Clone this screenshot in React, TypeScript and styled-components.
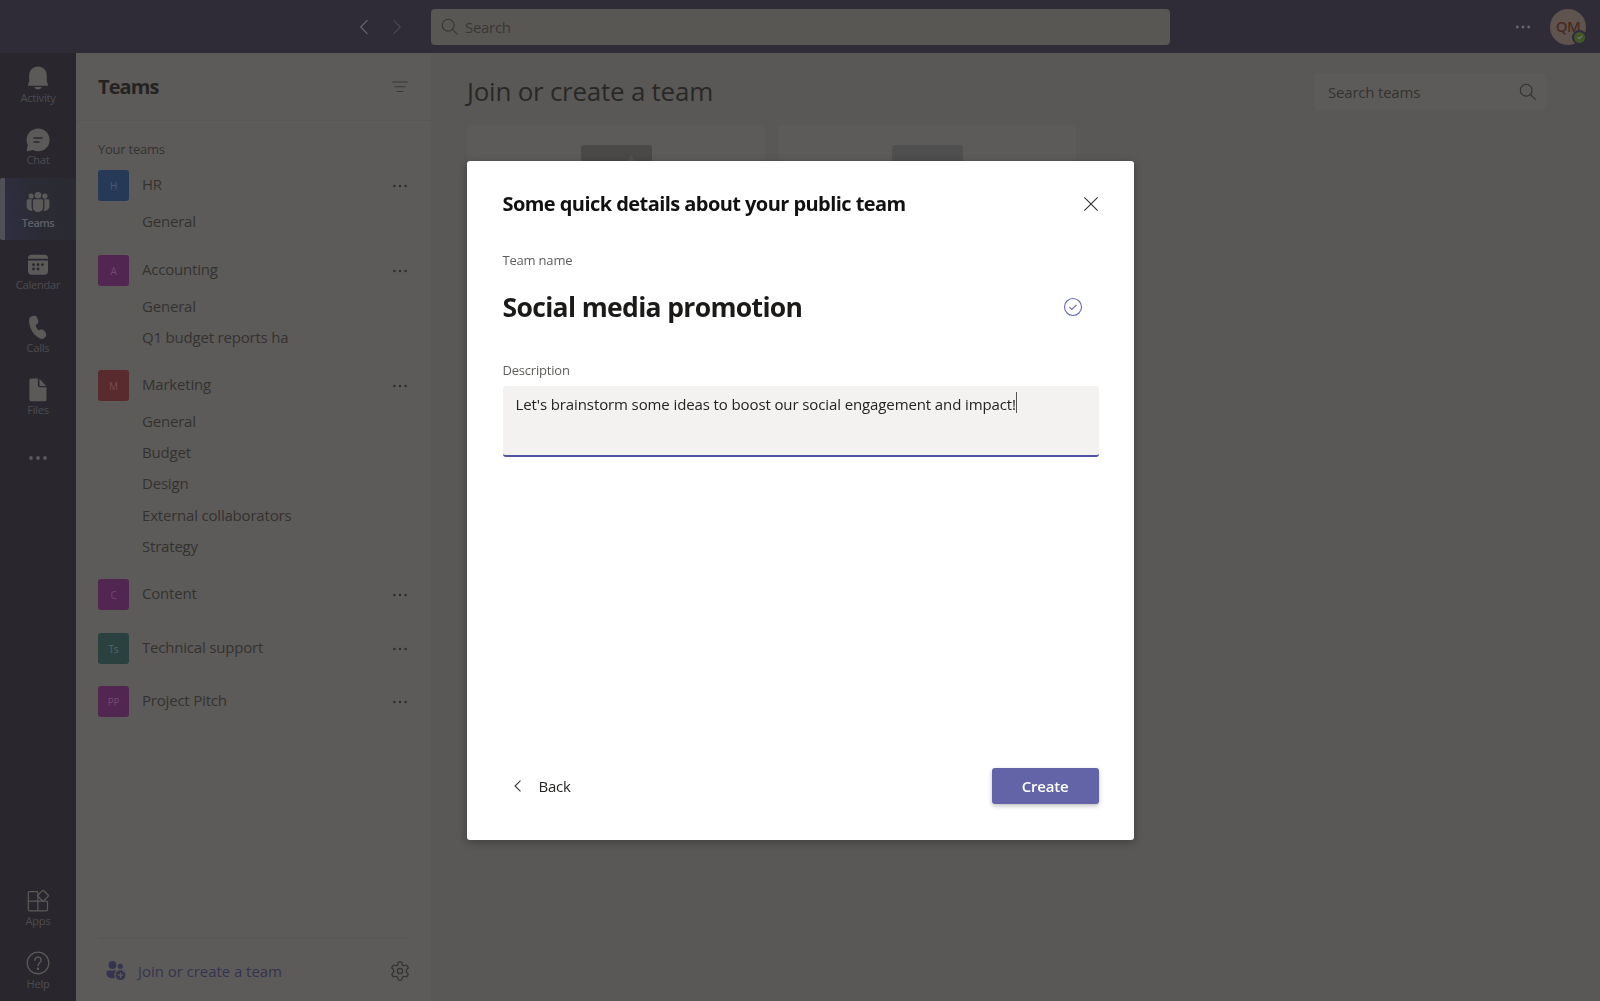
import React from 'react';
import styled, { createGlobalStyle } from 'styled-components';

type Team = {
  initials: string;
  name: string;
  color: string;
  ink: string;
  channels: string[];
};

const teams: Team[] = [
  { initials: 'H', name: 'HR', color: '#263a58', ink: '#485a78', channels: ['General'] },
  { initials: 'A', name: 'Accounting', color: '#512650', ink: '#744872', channels: ['General', 'Q1 budget reports ha'] },
  {
    initials: 'M',
    name: 'Marketing',
    color: '#592a2e',
    ink: '#7b4a4f',
    channels: ['General', 'Budget', 'Design', 'External collaborators', 'Strategy'],
  },
  { initials: 'C', name: 'Content', color: '#512650', ink: '#744872', channels: [] },
  { initials: 'Ts', name: 'Technical support', color: '#2a413f', ink: '#506866', channels: [] },
  { initials: 'PP', name: 'Project Pitch', color: '#512650', ink: '#744872', channels: [] },
];

const description = "Let's brainstorm some ideas to boost our social engagement and impact!";

function Dots({ size = 16, r = 1.2, gap = 5.6 }: { size?: number; r?: number; gap?: number }) {
  const c = size / 2;
  return (
    <svg width={size} height={size} viewBox={`0 0 ${size} ${size}`} fill="currentColor">
      <circle cx={c - gap} cy={c} r={r} />
      <circle cx={c} cy={c} r={r} />
      <circle cx={c + gap} cy={c} r={r} />
    </svg>
  );
}

function SearchIcon() {
  return (
    <svg width="18" height="18" viewBox="0 0 18 18" fill="none" stroke="currentColor" strokeWidth="1.1">
      <circle cx="7.2" cy="7.2" r="5.9" />
      <path d="M11.5 11.5L16.6 16.6" />
    </svg>
  );
}

function BellIcon() {
  return (
    <svg width="24" height="24" viewBox="0 0 24 24" fill="currentColor">
      <path d="M12 .6c-5 0-8.8 3.9-8.8 8.800v5.800L2.100 18.500c-.3.700.100 1.300.800 1.300h18.200c.700 0 1.100-.6.800-1.300l-1.100-3.300V9.400C20.800 4.500 17 .6 12 .6z" />
      <path d="M8.300 21h7.400c-.5 1.500-1.900 2.500-3.700 2.500S8.800 22.500 8.300 21z" />
    </svg>
  );
}

function ChatIcon() {
  return (
    <svg width="24" height="24" viewBox="0 0 24 24">
      <path
        fill="currentColor"
        d="M12.100.6C18.500.6 23.600 5.600 23.600 12S18.500 23.300 12.100 23.300c-1.800 0-3.600-.4-5.100-1.200L1.500 23.300c-.5.100-.9-.3-.8-.8l1.100-5.400C1 15.600.600 13.900.600 12 .6 5.600 5.700.6 12.100.6z"
      />
      <path d="M8 10h8M8 14.100h5" stroke="#2a282e" strokeWidth="1.5" strokeLinecap="round" />
    </svg>
  );
}

function TeamsIcon() {
  return (
    <svg width="24" height="24" viewBox="0 0 24 24" fill="currentColor">
      <circle cx="12" cy="5.2" r="3.3" />
      <circle cx="5.1" cy="6" r="2.6" />
      <circle cx="18.9" cy="6" r="2.6" />
      <path d="M8.500 9.300h7c.9 0 1.600.7 1.600 1.600v6c0 3-2.200 5.200-5.100 5.200s-5.100-2.200-5.100-5.200v-6c0-.9.700-1.600 1.600-1.600z" />
      <path d="M2.100 9.300h4c-.3.500-.5 1-.5 1.600v6c0 1.400.4 2.700 1.100 3.700C3.500 21.100.6 19 .6 16.200v-5.300c0-.9.600-1.600 1.500-1.600z" />
      <path d="M21.900 9.300h-4c.3.500.5 1 .5 1.600v6c0 1.400-.4 2.700-1.100 3.700 3.200.500 6.100-1.600 6.100-4.400v-5.300c0-.9-.6-1.600-1.500-1.600z" />
    </svg>
  );
}

function CalendarIcon() {
  return (
    <svg width="24" height="24" viewBox="0 0 24 24">
      <path fill="currentColor" d="M5.200 1.800h13.600c1.800 0 3.200 1.400 3.200 3.200v.8H2V5c0-1.800 1.400-3.200 3.200-3.200z" />
      <path fill="currentColor" d="M2 7.400h20v11.200c0 1.800-1.400 3.200-3.200 3.200H5.200C3.400 21.800 2 20.400 2 18.600z" />
      <g fill="#2a282e">
        <circle cx="7.5" cy="11.7" r="1.4" />
        <circle cx="12" cy="11.7" r="1.4" />
        <circle cx="16.4" cy="11.7" r="1.4" />
        <circle cx="7.5" cy="16" r="1.4" />
        <circle cx="12" cy="16" r="1.4" />
      </g>
    </svg>
  );
}

function PhoneIcon() {
  return (
    <svg width="24" height="24" viewBox="0 0 24 24" fill="currentColor">
      <path d="M5.400 1.500l1.800-.6c1.700-.5 3.400.3 4 1.900l.9 2.500c.5 1.300.200 2.600-.7 3.500l-1.700 1.500c.3 1.800 1.300 3.600 2.800 5l2.300-.7c1.300-.4 2.600.1 3.400 1.200l1.400 2c1 1.400.8 3.300-.4 4.400l-.9.8c-1 .9-2.400 1.100-3.800.7C7.700 21.300 2.700 12.700 3.100 5c.1-1.600.9-3 2.300-3.500z" />
    </svg>
  );
}

function FileIcon() {
  return (
    <svg width="24" height="24" viewBox="0 0 24 24" fill="currentColor">
      <path d="M5.600.6h6.300v6.600c0 1.200.9 2.100 2.100 2.100h6.500V21.500c0 1-.8 1.800-1.800 1.800H5.200c-1 0-1.800-.8-1.800-1.800V2.400C3.400 1.400 4.200.6 5.600.6z" />
      <path d="M13.500 1l6.800 6.900H14c-.3 0-.5-.2-.5-.500z" />
    </svg>
  );
}

function AppsIcon() {
  return (
    <svg width="24" height="24" viewBox="0 0 24 24" fill="none" stroke="currentColor" strokeWidth="1.2" strokeLinejoin="round">
      <path d="M3.600 2.600h7a1.300 1.300 0 0 1 1.300 1.300v8.300h8.300a1.300 1.300 0 0 1 1.300 1.300v7a1.300 1.300 0 0 1-1.300 1.300H3.600a1.300 1.300 0 0 1-1.300-1.300V3.900a1.300 1.300 0 0 1 1.300-1.300z" />
      <path d="M2.300 12.200h9.600v9.600" />
      <path d="M16.400 1.700a1 1 0 0 1 1.400 0l4.300 4.300a1 1 0 0 1 0 1.400l-4.300 4.300a1 1 0 0 1-1.400 0l-4.300-4.300a1 1 0 0 1 0-1.400z" />
    </svg>
  );
}

function HelpIcon() {
  return (
    <svg width="24" height="24" viewBox="0 0 24 24" fill="none" stroke="currentColor" strokeWidth="1.3" strokeLinecap="round">
      <circle cx="12" cy="12" r="10.8" />
      <path d="M8.900 9.300C8.900 7.500 10.200 6.200 12 6.200s3.100 1.300 3.100 3c0 2.500-3.100 2.800-3.100 5.500" />
      <circle cx="12" cy="17.8" r=".6" fill="currentColor" />
    </svg>
  );
}

function JoinIcon() {
  return (
    <svg width="20" height="20" viewBox="0 0 20 20">
      <g fill="currentColor">
        <circle cx="6.5" cy="4" r="3.9" />
        <circle cx="14.3" cy="5.3" r="2.6" />
        <path d="M2.400 9.400h8.300c-1.600 1-2.500 2.700-2.500 4.600 0 1.100.3 2.100.8 2.900-.8.200-1.600.3-2.500.3-3.500 0-6-1.500-6-4.200v-1.600c0-1.100.8-2 1.900-2z" />
        <circle cx="14.5" cy="14.2" r="4.9" />
      </g>
      <path d="M14.500 11.400v5.600M11.700 14.200h5.600" stroke="#5d5b59" strokeWidth="1.2" />
    </svg>
  );
}

function GearIcon() {
  return (
    <svg width="20" height="20" viewBox="0 0 20 20" fill="none" stroke="currentColor" strokeWidth="1.2" strokeLinejoin="round">
      <path d="M8.300 1.200Q10 .700 11.700 1.200L12.300 3.900Q13.200 4.300 13.900 4.800L16.500 4Q17.800 5.300 18.300 7L16.300 8.900Q16.400 10 16.300 11.100L18.300 13Q17.800 14.700 16.500 16L13.900 15.200Q13.200 15.800 12.300 16.200L11.700 18.800Q10 19.300 8.300 18.800L7.700 16.200Q6.800 15.800 6.100 15.200L3.500 16Q2.200 14.700 1.700 13L3.700 11.100Q3.600 10 3.700 8.900L1.700 7Q2.200 5.300 3.500 4L6.100 4.800Q6.800 4.300 7.700 3.900Z" />
      <circle cx="10" cy="10" r="2.6" />
    </svg>
  );
}

export default function App() {
  const teamList = teams.map((team) => (
    <TeamGroup key={team.name}>
      <TeamRow>
        <TeamAvatar $color={team.color} $ink={team.ink}>{team.initials}</TeamAvatar>
        <TeamName>{team.name}</TeamName>
        <MoreButton><Dots /></MoreButton>
      </TeamRow>
      {team.channels.map((channel) => (
        <Channel key={channel}>{channel}</Channel>
      ))}
    </TeamGroup>
  ));

  return (
    <Page>
      <GlobalStyle />
      <TopBar>
        <HistoryNav>
          <NavArrow $color="#6a6872">
            <svg width="10" height="16" viewBox="0 0 10 16" fill="none" stroke="currentColor" strokeWidth="1.1">
              <path d="M8.500 1.200L1.700 8l6.800 6.800" />
            </svg>
          </NavArrow>
          <NavArrow $color="#4a4854">
            <svg width="10" height="16" viewBox="0 0 10 16" fill="none" stroke="currentColor" strokeWidth="1.1">
              <path d="M1.500 1.200L8.300 8l-6.800 6.800" />
            </svg>
          </NavArrow>
        </HistoryNav>
        <GlobalSearch>
          <SearchIcon />
          Search
        </GlobalSearch>
        <Account>
          <Dots r={1.4} gap={5.7} />
          <UserAvatar>
            QM
            <Presence>
              <svg width="8" height="8" viewBox="0 0 8 8" fill="none" stroke="#6b7568" strokeWidth="1.2">
                <path d="M1.800 4.200l1.500 1.400L6.300 2.600" />
              </svg>
            </Presence>
          </UserAvatar>
        </Account>
      </TopBar>
      <Body>
        <Rail>
          <RailItem><BellIcon /><span>Activity</span></RailItem>
          <RailItem><ChatIcon /><span>Chat</span></RailItem>
          <RailItem $active><TeamsIcon /><span>Teams</span></RailItem>
          <RailItem><CalendarIcon /><span>Calendar</span></RailItem>
          <RailItem><PhoneIcon /><span>Calls</span></RailItem>
          <RailItem><FileIcon /><span>Files</span></RailItem>
          <RailMore><Dots size={20} r={1.9} gap={7} /></RailMore>
          <RailSpacer />
          <RailItem><AppsIcon /><span>Apps</span></RailItem>
          <RailItem><HelpIcon /><span>Help</span></RailItem>
        </Rail>
        <Sidebar>
          <SidebarHeader>
            <h2>Teams</h2>
            <svg width="16" height="12" viewBox="0 0 16 12" stroke="#3b3938" strokeWidth="1.1" strokeLinecap="round">
              <path d="M.6 1h14.800M2.700 5.700h10.600M5 10.500h6" />
            </svg>
          </SidebarHeader>
          <SectionLabel>Your teams</SectionLabel>
          {teamList}
          <SidebarFooter>
            <JoinLink><JoinIcon />Join or create a team</JoinLink>
            <GearIcon />
          </SidebarFooter>
        </Sidebar>
        <Main>
          <MainHeader>
            <h1>Join or create a team</h1>
            <TeamSearch>
              Search teams
              <SearchIcon />
            </TeamSearch>
          </MainHeader>
          <Cards>
            <Card>
              <CardImage $color="#4a4947">
                <svg width="70" height="71" viewBox="0 0 70 71" fill="#535250">
                  <path d="M50 9.500L56 20H44z" />
                </svg>
              </CardImage>
            </Card>
            <Card><CardImage $color="#4f4f4f" /></Card>
          </Cards>
        </Main>
      </Body>
      <Overlay>
        <Dialog role="dialog">
          <DialogHeader>
            <h3>Some quick details about your public team</h3>
            <svg width="16" height="16" viewBox="0 0 16 16" stroke="#333" strokeWidth="1.1">
              <path d="M1.300 1.300l13.400 13.400M14.700 1.300L1.300 14.700" />
            </svg>
          </DialogHeader>
          <FieldLabel>Team name</FieldLabel>
          <NameField>
            Social media promotion
            <svg width="20" height="20" viewBox="0 0 20 20" fill="none" stroke="#6668b4" strokeWidth="1.1">
              <circle cx="10" cy="10" r="8.5" />
              <path d="M6.500 10.200l2.300 2.200 4.700-4.600" />
            </svg>
          </NameField>
          <FieldLabel>Description</FieldLabel>
          <DescriptionField>
            <span>{description}</span>
            <Caret />
          </DescriptionField>
          <DialogFooter>
            <BackButton>
              <svg width="8" height="12" viewBox="0 0 8 12" fill="none" stroke="#333" strokeWidth="1.1">
                <path d="M6.500.7L1 6l5.500 5.300" />
              </svg>
              Back
            </BackButton>
            <CreateButton>Create</CreateButton>
          </DialogFooter>
        </Dialog>
      </Overlay>
    </Page>
  );
}

const GlobalStyle = createGlobalStyle`
  * {
    box-sizing: border-box;
  }

  body {
    margin: 0;
    font-family: "Open Sans", "Noto Sans", sans-serif;
    font-size: 15px;
    letter-spacing: -0.2px;
  }

  h1, h2, h3 {
    margin: 0;
  }

  button {
    border: 0;
    padding: 0;
    background: none;
    font: inherit;
    letter-spacing: inherit;
  }

  svg {
    display: block;
    flex: none;
  }
`;

const Page = styled.div`
  display: flex;
  flex-direction: column;
  width: 1600px;
  height: 1001px;
  overflow: hidden;
  color: #343230;
  background: #595856;
`;

const TopBar = styled.header`
  display: grid;
  grid-template-columns: 431px 739px 1fr;
  align-items: center;
  flex: none;
  height: 53px;
  background: #2f2c38;
`;

const HistoryNav = styled.nav`
  display: flex;
  justify-content: flex-end;
  gap: 23px;
  padding-right: 29px;
`;

const NavArrow = styled.span<{ $color: string }>`
  color: ${({ $color }) => $color};
`;

const GlobalSearch = styled.div`
  display: flex;
  align-items: center;
  gap: 6px;
  height: 36px;
  padding: 0 0 0 10px;
  border-radius: 4px;
  letter-spacing: -0.3px;
  color: #383737;
  background: #585753;
`;

const Account = styled.div`
  display: flex;
  align-items: center;
  justify-content: flex-end;
  gap: 19px;
  padding-right: 14px;
  color: #676570;
`;

const UserAvatar = styled.div`
  position: relative;
  width: 36px;
  height: 36px;
  border-radius: 50%;
  line-height: 35px;
  text-align: center;
  font-weight: 600;
  letter-spacing: -0.5px;
  color: #4a2a20;
  background: #5f5350;
`;

const Presence = styled.i`
  position: absolute;
  right: -1px;
  bottom: 0;
  display: flex;
  align-items: center;
  justify-content: center;
  width: 15px;
  height: 15px;
  border: 2px solid #2f2c38;
  border-radius: 50%;
  background: #42562a;
`;

const Body = styled.div`
  display: flex;
  flex: 1;
  min-height: 0;
`;

const Rail = styled.nav`
  display: flex;
  flex-direction: column;
  flex: none;
  width: 76px;
  background: #29272d;
`;

const RailItem = styled.div<{ $active?: boolean }>`
  display: flex;
  flex-direction: column;
  align-items: center;
  flex: none;
  height: 62.4px;
  padding-top: 12.6px;
  font-size: 11px;
  line-height: 15px;
  letter-spacing: -0.2px;
  color: #5b5a59;
  ${({ $active }) => $active && `
    padding-right: 5px;
    border-left: 5px solid #515058;
    border-radius: 2px 0 0 2px;
    background: linear-gradient(80deg, #302f46 -10%, #2b2b35 45%, #2a2b30);
    font-weight: 600;
    letter-spacing: -0.5px;
  `}

  span {
    margin-top: 0.5px;
    color: ${({ $active }) => ($active ? '#605f68' : '#4d4b50')};
  }
`;

const RailMore = styled.div`
  display: flex;
  justify-content: center;
  padding-top: 21px;
  color: #59585c;
`;

const RailSpacer = styled.div`
  flex: 1;
`;

const Sidebar = styled.aside`
  display: flex;
  flex-direction: column;
  flex: none;
  width: 355px;
  background: #5d5b59;
`;

const SidebarHeader = styled.div`
  display: flex;
  align-items: center;
  justify-content: space-between;
  flex: none;
  height: 68px;
  padding: 0 23px 0 22px;
  border-bottom: 1px solid #595755;

  h2 {
    padding-top: 1px;
    font-size: 20px;
    line-height: 28px;
    letter-spacing: -0.9px;
    color: #252322;
  }
`;

const SectionLabel = styled.div`
  margin: 18px 22px 11px;
  font-size: 13px;
  line-height: 20px;
  letter-spacing: -0.25px;
`;

const TeamGroup = styled.section`
  margin-bottom: 17.4px;
`;

const TeamRow = styled.div`
  display: flex;
  height: 36px;
  padding: 0 23px 0 22px;
`;

const TeamAvatar = styled.div<{ $color: string; $ink: string }>`
  width: 31px;
  height: 31px;
  margin-right: 13px;
  border-radius: 3px;
  font-size: 10px;
  line-height: 33px;
  text-align: center;
  color: ${({ $ink }) => $ink};
  background: ${({ $color }) => $color};
`;

const TeamName = styled.div`
  flex: 1;
  line-height: 28px;
`;

const MoreButton = styled.button`
  height: 32px;
  color: #2f2d2c;
`;

const Channel = styled.div`
  height: 31.15px;
  padding-left: 66px;
  line-height: 30px;
`;

const SidebarFooter = styled.div`
  display: flex;
  align-items: center;
  justify-content: space-between;
  height: 64px;
  margin: auto 21px 0 22px;
  padding-top: 1px;
  padding-left: 8px;
  border-top: 2px solid #5a5856;
`;

const JoinLink = styled.div`
  display: flex;
  align-items: center;
  gap: 12px;
  letter-spacing: -0.05px;
  color: #35344f;
`;

const Main = styled.main`
  flex: 1;
  padding: 20px 54px 0 36px;
  background: #595856;
`;

const MainHeader = styled.div`
  display: flex;
  justify-content: space-between;
  height: 52px;

  h1 {
    font-size: 26px;
    font-weight: 400;
    line-height: 37px;
    letter-spacing: -0.25px;
    color: #292827;
  }
`;

const TeamSearch = styled.div`
  display: flex;
  align-items: center;
  justify-content: space-between;
  width: 232px;
  height: 37px;
  padding: 0 9px 0 14px;
  border-radius: 4px;
  background: #5c5b59;
`;

const Cards = styled.div`
  display: flex;
  gap: 13px;
`;

const Card = styled.div`
  width: 298px;
  height: 300px;
  padding-top: 20px;
  border-radius: 3px;
  background: #5c5b59;
`;

const CardImage = styled.div<{ $color: string }>`
  width: 71px;
  height: 71px;
  margin: 0 auto;
  border-radius: 3px;
  background: ${({ $color }) => $color};
`;

const Overlay = styled.div`
  position: fixed;
  inset: 0;
  display: flex;
  align-items: center;
  justify-content: center;
`;

const Dialog = styled.div`
  display: flex;
  flex-direction: column;
  width: 667px;
  height: 679px;
  padding: 28px 35px 36px 36px;
  border-radius: 3px;
  color: #252423;
  background: #fff;
  box-shadow: 0 2px 8px rgba(0, 0, 0, 0.3);
`;

const DialogHeader = styled.div`
  display: flex;
  justify-content: space-between;
  align-items: center;
  height: 29px;
  margin-bottom: 32px;

  h3 {
    font-size: 20px;
    color: #111;
    letter-spacing: -0.56px;
  }
`;

const FieldLabel = styled.div`
  height: 20px;
  font-size: 13px;
  line-height: 20px;
  letter-spacing: -0.2px;
  color: #605e5c;
`;

const NameField = styled.div`
  display: flex;
  align-items: center;
  justify-content: space-between;
  height: 73px;
  margin-bottom: 17px;
  padding-right: 16px;
  font-size: 26.5px;
  font-weight: 700;
  letter-spacing: -0.65px;
  color: #1b1a19;
`;

const DescriptionField = styled.div`
  display: flex;
  height: 71px;
  margin-top: 6px;
  padding: 6px 13px;
  border-bottom: 2px solid #4f52a5;
  border-radius: 3px;
  line-height: 24px;
  letter-spacing: -0.11px;
  white-space: nowrap;
  background: #f3f2f1;
`;

const Caret = styled.i`
  width: 1px;
  height: 21px;
  background: #555;
`;

const DialogFooter = styled.div`
  display: flex;
  align-items: center;
  justify-content: space-between;
  margin-top: auto;
`;

const BackButton = styled.button`
  display: flex;
  align-items: center;
  gap: 17px;
  padding-left: 11px;
  color: #252423;
`;

const CreateButton = styled.button`
  width: 107px;
  height: 36px;
  border-radius: 3px;
  font-weight: 600;
  color: #fff;
  background: #6264a7;
  box-shadow: 0 2px 4px rgba(0, 0, 0, 0.25);
`;
